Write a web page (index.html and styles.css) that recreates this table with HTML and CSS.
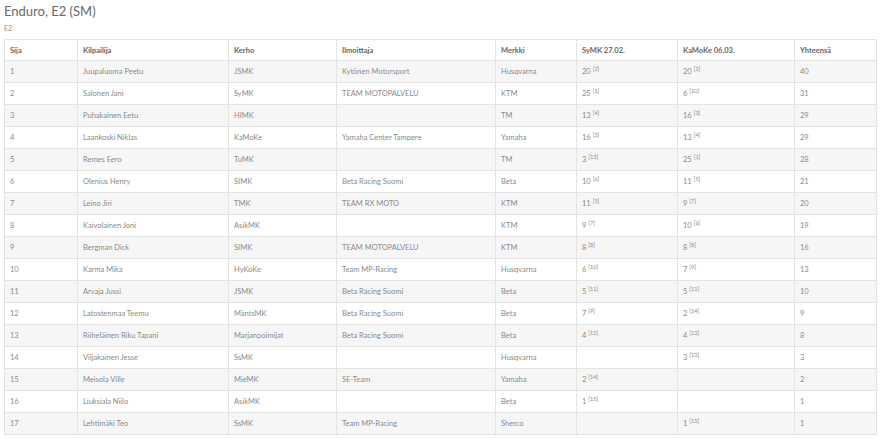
FILE: index.html
```html
<!DOCTYPE html>
<html lang="fi">
<head>
<meta charset="utf-8">
<title>Enduro, E2 (SM)</title>
<link rel="stylesheet" href="styles.css">
</head>
<body>
<div class="page">
  <h1 class="title">Enduro, E2 (SM)</h1>
  <div class="subtitle">E2</div>
  <table class="results">
    <colgroup>
      <col class="c-sija"><col class="c-name"><col class="c-club"><col class="c-team"><col class="c-brand"><col class="c-r1"><col class="c-r2"><col class="c-total">
    </colgroup>
    <thead>
      <tr><th>Sija</th><th>Kilpailija</th><th>Kerho</th><th>Ilmoittaja</th><th>Merkki</th><th>SyMK 27.02.</th><th>KaMoKe 06.03.</th><th>Yhteensä</th></tr>
    </thead>
    <tbody>
      <tr><td>1</td><td>Juupaluoma Peetu</td><td>JSMK</td><td>Kytönen Motorsport</td><td>Husqvarna</td><td>20<sup>[2]</sup></td><td>20<sup>[2]</sup></td><td>40</td></tr>
      <tr><td>2</td><td>Salonen Jani</td><td>SyMK</td><td>TEAM MOTOPALVELU</td><td>KTM</td><td>25<sup>[1]</sup></td><td>6<sup>[10]</sup></td><td>31</td></tr>
      <tr><td>3</td><td>Puhakainen Eetu</td><td>HIMK</td><td></td><td>TM</td><td>13<sup>[4]</sup></td><td>16<sup>[3]</sup></td><td>29</td></tr>
      <tr><td>4</td><td>Laankoski Niklas</td><td>KaMoKe</td><td>Yamaha Center Tampere</td><td>Yamaha</td><td>16<sup>[3]</sup></td><td>13<sup>[4]</sup></td><td>29</td></tr>
      <tr><td>5</td><td>Remes Eero</td><td>TuMK</td><td></td><td>TM</td><td>3<sup>[13]</sup></td><td>25<sup>[1]</sup></td><td>28</td></tr>
      <tr><td>6</td><td>Olenius Henry</td><td>SIMK</td><td>Beta Racing Suomi</td><td>Beta</td><td>10<sup>[6]</sup></td><td>11<sup>[5]</sup></td><td>21</td></tr>
      <tr><td>7</td><td>Leino Jiri</td><td>TMK</td><td>TEAM RX MOTO</td><td>KTM</td><td>11<sup>[5]</sup></td><td>9<sup>[7]</sup></td><td>20</td></tr>
      <tr><td>8</td><td>Kaivolainen Joni</td><td>AsikMK</td><td></td><td>KTM</td><td>9<sup>[7]</sup></td><td>10<sup>[6]</sup></td><td>19</td></tr>
      <tr><td>9</td><td>Bergman Dick</td><td>SIMK</td><td>TEAM MOTOPALVELU</td><td>KTM</td><td>8<sup>[8]</sup></td><td>8<sup>[8]</sup></td><td>16</td></tr>
      <tr><td>10</td><td>Karma Mika</td><td>HyKoKe</td><td>Team MP-Racing</td><td>Husqvarna</td><td>6<sup>[10]</sup></td><td>7<sup>[9]</sup></td><td>13</td></tr>
      <tr><td>11</td><td>Arvaja Jussi</td><td>JSMK</td><td>Beta Racing Suomi</td><td>Beta</td><td>5<sup>[11]</sup></td><td>5<sup>[11]</sup></td><td>10</td></tr>
      <tr><td>12</td><td>Latostenmaa Teemu</td><td>MäntsMK</td><td>Beta Racing Suomi</td><td>Beta</td><td>7<sup>[9]</sup></td><td>2<sup>[14]</sup></td><td>9</td></tr>
      <tr><td>13</td><td>Riiheläinen Riku Tapani</td><td>Marjanpoimijat</td><td>Beta Racing Suomi</td><td>Beta</td><td>4<sup>[12]</sup></td><td>4<sup>[12]</sup></td><td>8</td></tr>
      <tr><td>14</td><td>Viljakainen Jesse</td><td>SsMK</td><td></td><td>Husqvarna</td><td></td><td>3<sup>[13]</sup></td><td>3</td></tr>
      <tr><td>15</td><td>Meisola Ville</td><td>MieMK</td><td>SE-Team</td><td>Yamaha</td><td>2<sup>[14]</sup></td><td></td><td>2</td></tr>
      <tr><td>16</td><td>Liuksiala Niilo</td><td>AsikMK</td><td></td><td>Beta</td><td>1<sup>[15]</sup></td><td></td><td>1</td></tr>
      <tr><td>17</td><td>Lehtimäki Teo</td><td>SsMK</td><td>Team MP-Racing</td><td>Sherco</td><td></td><td>1<sup>[15]</sup></td><td>1</td></tr>
    </tbody>
  </table>
</div>
</body>
</html>
```

FILE: styles.css
```css
html, body {
  margin: 0;
  padding: 0;
  background: #ffffff;
}

.page {
  padding: 3px 4px 0 4px;
  font-family: Lato, "Open Sans", "Liberation Sans", sans-serif;
  color: #7a7a7a;
}

.title {
  margin: 0;
  font-size: 13px;
  line-height: 17px;
  font-weight: 400;
  color: #6a6a6a;
}

.subtitle {
  margin: 4px 0 0 0;
  font-size: 7px;
  line-height: 9px;
  color: #8a8a8a;
}

.results {
  margin-top: 6px;
  width: 872px;
  table-layout: fixed;
  border-collapse: collapse;
  font-size: 7.5px;
}

.c-sija { width: 73px; }
.c-name { width: 151px; }
.c-club { width: 108px; }
.c-team { width: 159px; }
.c-brand { width: 81px; }
.c-r1 { width: 101px; }
.c-r2 { width: 117px; }
.c-total { width: 82px; }

.results th,
.results td {
  border: 1px solid #e4e4e4;
  padding: 0 5px;
  text-align: left;
  white-space: nowrap;
  overflow: hidden;
}

.results th {
  height: 20px;
  font-weight: 700;
  color: #666666;
  background: #ffffff;
}

.results td {
  height: 21px;
  font-weight: 400;
  color: #8a8a8a;
}

.results tbody tr:nth-child(odd) td {
  background: #f6f6f6;
}

.results sup {
  font-size: 5.5px;
  vertical-align: 3.5px;
  line-height: 0;
  margin-left: 2px;
}
```
